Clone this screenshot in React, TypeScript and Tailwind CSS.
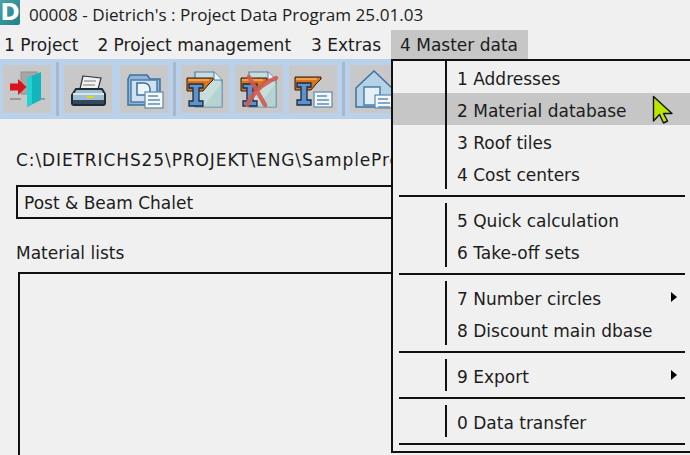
import React from "react";

const FONT = "font-['DejaVu_Sans',sans-serif]";

const Door = () => (
  <svg viewBox="0 0 48 48" className="w-12 h-12 blur-[0.3px]">
    <path d="M7 34h11M37 34h5" stroke="#8a8a8a" strokeWidth="1.5" fill="none" />
    <rect x="18" y="7" width="16" height="22" fill="#a6a6a6" stroke="#8f8f8f" />
    <path d="M7 18.5h8V14l8.500 8-8.500 8v-4.500H7z" fill="#d8141c" />
    <path d="M24 13 38 7v28l-14 7z" fill="#12b5bd" />
    <path d="M24 13 29 11v28l-5 3z" fill="#22d3d3" />
  </svg>
);

const Printer = () => (
  <svg viewBox="0 0 48 48" className="w-12 h-12 blur-[0.3px]">
    <path d="M19 11 37 13 33 28H15z" fill="#f2f2f2" stroke="#333" strokeWidth="1.2" />
    <path d="M20 16h12M19 20h12M18 24h12" stroke="#777" />
    <path d="M12 24h26l3 5v9a2 2 0 0 1-2 2H10a2 2 0 0 1-2-2v-8z" fill="#9fc0cf" stroke="#1f2a38" strokeWidth="2" />
    <path d="M9 29h31" stroke="#d7e6ec" strokeWidth="2" />
    <rect x="9" y="35" width="31" height="4" fill="#33485c" />
    <rect x="23" y="31" width="7" height="2" fill="#e6d21f" />
  </svg>
);

const SmallDoc = ({ x, y, w = 18, h = 16 }: { x: number; y: number; w?: number; h?: number }) => (
  <g>
    <rect x={x} y={y} width={w} height={h} fill="#f4f8fb" stroke="#5b88b0" strokeWidth="1.2" />
    <path
      d={`M${x + 3} ${y + 4}h${w - 8}M${x + 3} ${y + 8}h${w - 6}M${x + 3} ${y + 12}h${w - 6}`}
      stroke="#5d8db5"
      strokeWidth="1.4"
    />
  </g>
);

const FolderDoc = () => (
  <svg viewBox="0 0 48 48" className="w-12 h-12 blur-[0.3px]">
    <path d="M8 14l2-4h17l3 4h10v26H8z" fill="#8fb4d4" stroke="#3d6f9f" strokeWidth="1.5" />
    <rect x="11" y="15" width="26" height="22" fill="#cfe0ee" stroke="#4b7dab" strokeWidth="1.5" />
    <path d="M17 18h7a6 6 0 0 1 6 6v6H17z" fill="#eef4f9" stroke="#3d6f9f" strokeWidth="1.5" />
    <SmallDoc x={25} y={27} />
  </svg>
);

const Beam = ({ y = 0 }: { y?: number }) => (
  <g transform={`translate(0 ${y})`}>
    <path d="M6 13h26v2l-5 5-5 6H6z" fill="#d8741c" stroke="#2a1a10" strokeWidth="1" />
    <path d="M7 15h21" stroke="#f1a050" strokeWidth="2" />
    <path d="M8 19h14v4h-4v13h4v5H8v-5h4V23H8z" fill="#5d92cc" stroke="#1d2c44" strokeWidth="1.3" />
  </g>
);

const BeamPage = ({ cross }: { cross?: boolean }) => (
  <svg viewBox="0 0 48 48" className="w-12 h-12 blur-[0.3px]">
    <path d="M14 7h19l8 8v27H14z" fill="#c8dedd" stroke="#4f7fa8" strokeWidth="1.2" />
    <path d="M33 7v8h8" fill="#eef5f8" stroke="#4f7fa8" />
    <path d="M41 42H22l19-24z" fill="#a9cdca" opacity="0.6" />
    <Beam />
    {cross && <path d="M14 12 30 40M12 40c6-12 16-22 29-27" stroke="#d25a50" strokeWidth="4.5" fill="none" opacity="0.9" strokeLinecap="round" />}
  </svg>
);

const BeamDoc = () => (
  <svg viewBox="0 0 48 48" className="w-12 h-12 blur-[0.3px]">
    <Beam y={-1} />
    <SmallDoc x={25} y={27} h={15} />
  </svg>
);

const House = () => (
  <svg viewBox="0 0 48 48" className="w-12 h-12 blur-[0.3px]">
    <path d="M6 23 24 6l18 17v19H6z" fill="#b6d2e6" stroke="#3d6f9f" strokeWidth="1.5" />
    <rect x="14" y="22" width="16" height="18" fill="#e6f0f7" stroke="#4b7dab" strokeWidth="1.5" />
    <SmallDoc x={25} y={30} h={13} />
  </svg>
);

const ToolButton = ({ children }: { children: React.ReactNode }) => (
  <div className="w-12 h-12 bg-[#c8c8c8]">{children}</div>
);

const Sep = () => <div className="w-[3px] h-[54px] mx-[5px] bg-[#a9b8c8]" />;

const groups = [
  [
    { label: "1 Addresses" },
    { label: "2 Material database", active: true },
    { label: "3 Roof tiles" },
    { label: "4 Cost centers" },
  ],
  [{ label: "5 Quick calculation" }, { label: "6 Take-off sets" }],
  [{ label: "7 Number circles", sub: true }, { label: "8 Discount main dbase" }],
  [{ label: "9 Export", sub: true }],
  [{ label: "0 Data transfer" }],
];

type Item = { label: string; active?: boolean; sub?: boolean };

const MenuGroup = ({ items, first }: { items: Item[]; first: boolean }) => (
  <div className={first ? "" : "mt-[6px]"}>
    <div className="relative">
      <div className="absolute left-[52px] top-0 bottom-0 w-[2px] bg-[#111] z-10" />
      {items.map((it) => (
        <div
          key={it.label}
          className={`h-8 pl-[64px] pr-[14px] flex items-center justify-between text-[17px] text-[#1c1c1c] ${
            it.active ? "bg-[#c6c6c6]" : ""
          }`}
        >
          <span className="pt-[5px]">{it.label}</span>
          {it.sub && <span className="w-0 h-0 border-y-[5px] border-y-transparent border-l-[6px] border-l-black" />}
        </div>
      ))}
    </div>
    <div className="h-[2px] bg-[#111] mx-[6px] mt-[6px]" />
  </div>
);

export default function App() {
  return (
    <div className={`relative w-[690px] h-[455px] overflow-hidden bg-[#f0f0f0] text-[#1c1c1c] ${FONT}`}>
      <div className="h-[30px] flex items-center">
        <div className="w-[20px] h-[25px] -mt-[5px] rounded-br-[2px] bg-gradient-to-br from-[#4aa5a3] to-[#1d7f8c] flex items-center justify-center text-white font-bold text-[23px] leading-none overflow-hidden">
          D
        </div>
        <span className="ml-[9px] text-[17.1px] font-['Open_Sans',sans-serif]">00008 - Dietrich's : Project Data Program 25.01.03</span>
      </div>

      <div className="h-[29px] flex items-center text-[17px]">
        <span className="ml-1 pt-[3px]">1 Project</span>
        <span className="ml-[19px] pt-[3px]">2 Project management</span>
        <span className="ml-[20px] pt-[3px]">3 Extras</span>
        <span className="ml-[10px] h-[29px] pl-[9px] pr-[10px] pt-[3px] flex items-center bg-[#c6c6c6]">4 Master data</span>
      </div>

      <div className="h-[60px] flex items-center pl-[3px] bg-[#b9d1ea]">
        <ToolButton><Door /></ToolButton>
        <Sep />
        <ToolButton><Printer /></ToolButton>
        <div className="w-2" />
        <ToolButton><FolderDoc /></ToolButton>
        <Sep />
        <ToolButton><BeamPage /></ToolButton>
        <div className="w-1.5" />
        <ToolButton><BeamPage cross /></ToolButton>
        <div className="w-1.5" />
        <ToolButton><BeamDoc /></ToolButton>
        <Sep />
        <ToolButton><House /></ToolButton>
      </div>

      <div className="pl-4 pt-[30px] text-[17px] whitespace-nowrap">
        <div className="h-[22px] leading-[22px] tracking-[0.9px]">C:\DIETRICHS25\PROJEKT\ENG\SampleProject</div>
        <div className="mt-[14px] h-[34px] w-[380px] border-2 border-[#111] pl-1.5 pt-[3px] flex items-center">Post &amp; Beam Chalet</div>
        <div className="mt-[23px] h-[22px] leading-[22px]">Material lists</div>
        <div className="mt-[8px] ml-0.5 w-[378px] h-[300px] border-2 border-r-0 border-[#111]" />
      </div>

      <div className="absolute left-[391px] top-[59px] w-[302px] border-2 border-[#111] bg-[#f0f0f0]">
        {groups.map((g, i) => (
          <MenuGroup key={i} items={g} first={i === 0} />
        ))}
        <div className="h-[6px]" />
      </div>

      <svg viewBox="0 0 22 30" className="absolute left-[652px] top-[95px] w-[22px] h-[30px]">
        <path d="M1.5 1.5V26l6-6.5 4 8.5 4-2-4-7.5h8.5z" fill="#b8e600" stroke="#111" strokeWidth="1.4" strokeLinejoin="round" />
      </svg>
    </div>
  );
}
